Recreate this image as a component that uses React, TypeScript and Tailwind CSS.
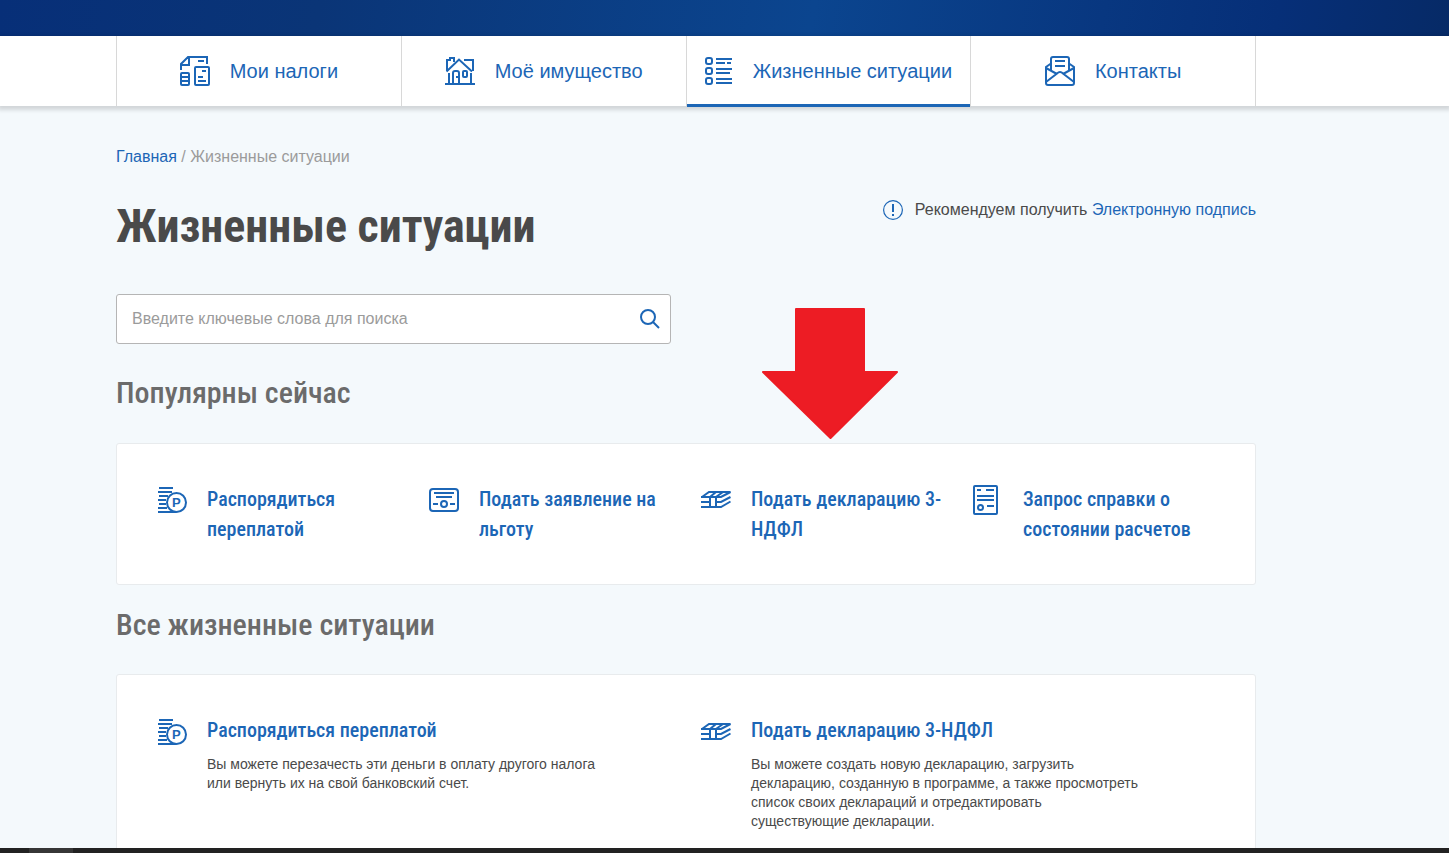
import type { ReactNode } from "react";
import { clsx } from "clsx";

type IconProps = { className?: string };

function TaxesIcon() {
  return (
    <svg width="30" height="30" fill="none" stroke="currentColor" strokeWidth="2" aria-hidden="true">
      <path d="M1 14V8l7-7h19v7M9 1v8H1M18 5h6" />
      <rect x="15" y="11" width="14" height="18" rx="1" />
      <path d="M22 15h4M18 21h5M18 25h8" />
      <rect x="1" y="17" width="8" height="12" rx="1" />
      <path d="M1 21h8M1 25h8" />
    </svg>
  );
}

function PropertyIcon() {
  return (
    <svg width="30" height="28" fill="none" stroke="currentColor" strokeWidth="2" aria-hidden="true">
      <path d="M0 27h30M4 16v11M26 16v11" />
      <path d="M1.500 14.500 14 2.500l13 12" />
      <path d="M2 14V3h3V1h4v4M19 3h9v11" />
      <path d="M8 27V16q0-2 2-2h2q2 0 2 2v11M11 20h3" />
      <rect x="18" y="14" width="4" height="6" rx="1" />
    </svg>
  );
}

function SituationsIcon() {
  return (
    <svg width="28" height="28" fill="none" stroke="currentColor" strokeWidth="2" aria-hidden="true">
      <rect x="1" y="1" width="6" height="6" rx="2" />
      <rect x="1" y="11" width="6" height="6" rx="2" />
      <rect x="1" y="21" width="6" height="6" rx="2" />
      <path d="M11 2h16M11 6h9M22 6h4M11 12h16M11 16h14M11 22h16M11 26h16" />
    </svg>
  );
}

function ContactsIcon() {
  return (
    <svg width="30" height="30" fill="none" stroke="currentColor" strokeWidth="2" aria-hidden="true">
      <path d="M6 14V3q0-2 2-2h14q2 0 2 2v11M10 5h10M10 10h10" />
      <path d="M6 7.500 1 11v16q0 2 2 2h24q2 0 2-2V11l-5-3.500" />
      <path d="m1 12 11 6M29 12l-11 6M1 26l11-8.500q3-3 6 0L29 26" />
    </svg>
  );
}

function CoinsIcon() {
  return (
    <svg width="31" height="27" fill="none" stroke="currentColor" strokeWidth="2" aria-hidden="true">
      <path d="M2 1h14M1 5h14M2 9h9M1 13h8M2 17h7M1 21h9M1 25h18" />
      <circle cx="19.500" cy="15.500" r="9.500" />
      <text x="15" y="20" fill="currentColor" stroke="none" className="font-['Liberation_Sans'] text-[13px] font-bold">
        P
      </text>
    </svg>
  );
}

function BenefitIcon() {
  return (
    <svg width="30" height="24" fill="none" stroke="currentColor" strokeWidth="2" aria-hidden="true">
      <rect x="1" y="1" width="28" height="22" rx="3" />
      <path d="M5 5h20M7 9h16M4 16h5M21 16h5" />
      <circle cx="15" cy="16" r="3" />
    </svg>
  );
}

function DeclarationIcon() {
  return (
    <svg width="30" height="18" fill="none" stroke="currentColor" strokeWidth="2" aria-hidden="true">
      <path d="M0 6h20L29.500 1H8L1 6M0 11h9M15 11h5l9.500-5M0 16h20l9.500-5.500" />
      <path d="M9 16V6l6-5M15 16V6l7-5" />
    </svg>
  );
}

function CertificateIcon() {
  return (
    <svg width="25" height="30" fill="none" stroke="currentColor" strokeWidth="2" aria-hidden="true">
      <rect x="1" y="1" width="23" height="28" rx="1" />
      <path d="M4 5h4M13 5h8M4 11h17M4 15h17M14 21h7" />
      <circle cx="7.500" cy="22.500" r="2.500" />
    </svg>
  );
}

function AlertIcon() {
  return (
    <svg width="20" height="20" fill="none" stroke="currentColor" aria-hidden="true">
      <circle cx="10" cy="10" r="9.400" strokeWidth="1.200" />
      <path d="M10 4v8M10 14v2" strokeWidth="2" />
    </svg>
  );
}

function SearchIcon() {
  return (
    <svg width="20" height="20" fill="none" stroke="currentColor" strokeWidth="2" aria-hidden="true">
      <circle cx="8" cy="8" r="7" />
      <path d="m13 13 6 6" />
    </svg>
  );
}

function ArrowDown({ className }: IconProps) {
  return (
    <svg width="136" height="131" className={className} aria-hidden="true">
      <path
        d="M34 1h68v63h33L68.500 130 1 64h33z"
        fill="#ed1c24"
        stroke="#ed1c24"
        strokeWidth="2"
        strokeLinejoin="round"
      />
    </svg>
  );
}

const navigation = [
  { name: "Мои налоги", icon: TaxesIcon },
  { name: "Моё имущество", icon: PropertyIcon },
  { name: "Жизненные ситуации", icon: SituationsIcon, active: true },
  { name: "Контакты", icon: ContactsIcon },
];

const popular = [
  { title: "Распорядиться переплатой", icon: CoinsIcon },
  { title: "Подать заявление на льготу", icon: BenefitIcon },
  { title: "Подать декларацию 3-НДФЛ", icon: DeclarationIcon, marked: true },
  { title: "Запрос справки о состоянии расчетов", icon: CertificateIcon },
];

const situations = [
  {
    title: "Распорядиться переплатой",
    text: "Вы можете перезачесть эти деньги в оплату другого налога или вернуть их на свой банковский счет.",
    icon: CoinsIcon,
  },
  {
    title: "Подать декларацию 3-НДФЛ",
    text: "Вы можете создать новую декларацию, загрузить декларацию, созданную в программе, а также просмотреть список своих деклараций и отредактировать существующие декларации.",
    icon: DeclarationIcon,
  },
];

const headingFont = "font-['Roboto_Condensed','Liberation_Sans_Narrow','Roboto',sans-serif]";

function SectionTitle({ children }: { children: ReactNode }) {
  return (
    <h2 className={clsx(headingFont, "text-[30px] leading-[40px] font-medium text-[#6b6b6b]")}>
      {children}
    </h2>
  );
}

export default function App() {
  return (
    <div className="flex h-screen flex-col overflow-hidden bg-[#f4f9fc] font-['Liberation_Sans',Arial,sans-serif] text-[#4a4a4a]">
      <div className="h-9 shrink-0 bg-[linear-gradient(100deg,#072f78_0%,#0a3577_22%,#0b458f_56%,#083780_76%,#062f78_88%,#062a66_100%)]" />

      <nav className="z-10 h-[70px] shrink-0 bg-white pr-[193px] pl-[116px] shadow-[0_2px_4px_2px_rgba(0,0,0,0.14)]">
        <ul className="grid h-full grid-cols-4 border-l border-[#d8d8d8]">
          {navigation.map((item) => (
            <li key={item.name} className="relative border-r border-[#d8d8d8]">
              <a
                href="#"
                className="flex h-full items-center justify-center gap-5 text-[20px] whitespace-nowrap text-[#1c66b6]"
              >
                <item.icon />
                <span>{item.name}</span>
              </a>
              {item.active && <span className="absolute inset-x-0 -bottom-px h-[3px] bg-[#1c66b6]" />}
            </li>
          ))}
        </ul>
      </nav>

      <main className="min-h-0 flex-1 overflow-hidden pt-[41px] pr-[193px] pl-[116px]">
        <div className="text-[16px] leading-5 text-[#9b9b9b]">
          <a href="#" className="text-[#1c66b6]">Главная</a> / Жизненные ситуации
        </div>

        <div className="mt-[27px] flex items-start justify-between">
          <h1 className={clsx(headingFont, "text-[46px] leading-[64px] font-bold text-[#4a4a4a]")}>
            Жизненные ситуации
          </h1>
          <p className="flex items-center gap-3 pt-[6px] text-[16px] leading-5">
            <span className="text-[#1c66b6]"><AlertIcon /></span>
            <span>
              Рекомендуем получить <a href="#" className="text-[#1c66b6]">Электронную подпись</a>
            </span>
          </p>
        </div>

        <form className="mt-9 flex h-[50px] w-[555px] items-center rounded-[3px] border border-[#b5b5b5] bg-white pr-[10px] pl-[15px]">
          <input
            type="text"
            aria-label="Поиск"
            placeholder="Введите ключевые слова для поиска"
            className="min-w-0 flex-1 text-[16px] outline-none placeholder:text-[#9b9b9b]"
          />
          <button type="button" aria-label="Найти" className="text-[#1c66b6]">
            <SearchIcon />
          </button>
        </form>

        <section className="pt-[29px]">
          <SectionTitle>Популярны сейчас</SectionTitle>
          <ul className="mt-[30px] grid min-h-[142px] grid-cols-4 rounded-[3px] border border-[#e8ebed] bg-white pt-10 pr-[10px] pl-10">
            {popular.map((item) => (
              <li key={item.title} className="relative">
                <a href="#" className="flex text-[#1c66b6]">
                  <span className="flex h-8 w-[50px] shrink-0 items-center"><item.icon /></span>
                  <span className={clsx(headingFont, "w-[196px] text-[20px] leading-[30px] font-medium")}>
                    {item.title}
                  </span>
                </a>
                {item.marked && <ArrowDown className="absolute -top-[176px] left-[61px]" />}
              </li>
            ))}
          </ul>
        </section>

        <section className="pt-5">
          <SectionTitle>Все жизненные ситуации</SectionTitle>
          <ul className="mt-[29px] grid min-h-[220px] grid-cols-2 rounded-[3px] border border-[#e8ebed] bg-white pt-10 pr-[10px] pl-10">
            {situations.map((item) => (
              <li key={item.title} className="flex">
                <span className="flex h-[34px] w-[50px] shrink-0 items-center text-[#1c66b6]"><item.icon /></span>
                <div>
                  <a href="#" className={clsx(headingFont, "block text-[20px] leading-[30px] font-medium text-[#1c66b6]")}>
                    {item.title}
                  </a>
                  <p className="mt-[10px] max-w-[390px] text-[14px] leading-[19px]">{item.text}</p>
                </div>
              </li>
            ))}
          </ul>
        </section>
      </main>

      <footer className="flex h-[5px] shrink-0 bg-[#222222] pl-[29px]">
        <span className="w-11 bg-[#363636]" />
      </footer>
    </div>
  );
}
